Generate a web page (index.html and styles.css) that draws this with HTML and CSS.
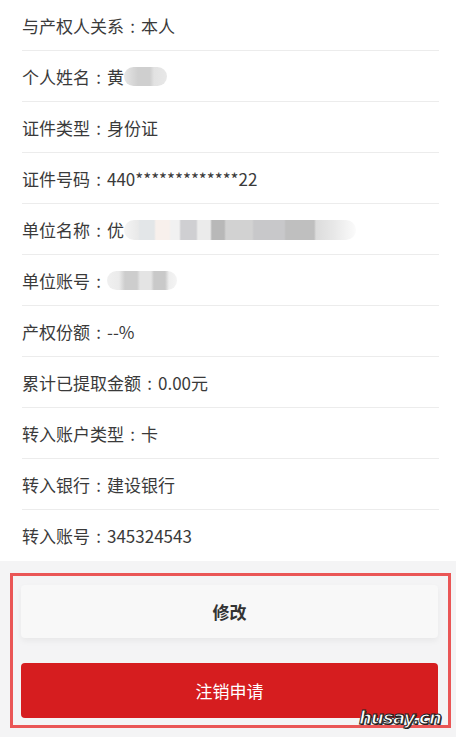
FILE: index.html
```html
<!DOCTYPE html>
<html lang="zh-CN">
<head>
<meta charset="utf-8">
<title>注销申请</title>
<link rel="stylesheet" href="styles.css">
</head>
<body>
<div class="page">
  <ul class="info">
    <li class="row">与产权人关系<span class="colon">:</span>本人</li>
    <li class="row">个人姓名<span class="colon">:</span>黄<span class="mask mask-name"></span></li>
    <li class="row">证件类型<span class="colon">:</span>身份证</li>
    <li class="row">证件号码<span class="colon">:</span>440*************22</li>
    <li class="row">单位名称<span class="colon">:</span>优<span class="mask mask-org"></span></li>
    <li class="row">单位账号<span class="colon">:</span><span class="mask mask-acct"></span></li>
    <li class="row">产权份额<span class="colon">:</span>--%</li>
    <li class="row">累计已提取金额<span class="colon">:</span>0.00元</li>
    <li class="row">转入账户类型<span class="colon">:</span>卡</li>
    <li class="row">转入银行<span class="colon">:</span>建设银行</li>
    <li class="row">转入账号<span class="colon">:</span>345324543</li>
  </ul>
  <div class="actions">
    <button class="btn btn-edit">修改</button>
    <button class="btn btn-cancel">注销申请</button>
  </div>
  <div class="annot"></div>
  <div class="watermark">husay.cn</div>
</div>
</body>
</html>
```

FILE: styles.css
```css
* { box-sizing: border-box; }
html, body {
  margin: 0;
  padding: 0;
  background: #ffffff;
}
body {
  font-family: "Noto Sans CJK SC", "Noto Sans", sans-serif;
  color: #3a3a3a;
}
.page {
  position: relative;
  width: 456px;
  height: 737px;
  overflow: hidden;
  display: flex;
  flex-direction: column;
}
.info {
  list-style: none;
  margin: 0 17px 0 22px;
  padding: 0;
}
.row {
  height: 51px;
  border-bottom: 1px solid #ececec;
  display: flex;
  align-items: center;
  font-size: 17px;
  line-height: 20px;
  padding-top: 1px;
  color: #3a3a3a;
  white-space: nowrap;
}
.row:last-child {
  border-bottom-color: #ffffff;
}
.colon {
  display: inline-block;
  width: 17px;
  text-align: center;
}
.mask {
  display: inline-block;
  height: 19px;
  border-radius: 10px;
  filter: blur(0.6px);
}
.mask-name {
  width: 43px;
  background: linear-gradient(90deg, #e6e6e6 0, #cfcfcf 14px, #cfcfcf 26px, #e2e2e2 30px, #e8e8e8 100%);
}
.mask-org {
  width: 232px;
  height: 20px;
  background: linear-gradient(90deg,
    #f4f4f4 0, #e9e9e9 14px, #e3e6e8 16px, #e3e6e8 30px,
    #f8f0ec 32px, #f8f0ec 45px, #f1f1f1 47px, #f1f1f1 55px,
    #cfcfd2 57px, #cfcfd2 72px, #ebebeb 74px, #ebebeb 86px,
    #b8b8b8 88px, #b8b8b8 100px, #d2d2d2 102px, #d2d2d2 128px,
    #c8c8ca 130px, #c8c8ca 160px, #bfbfbf 162px, #bfbfbf 190px,
    #dcdcdc 192px, #e8e8e8 210px, #f5f5f5 225px, #fbfbfb 100%);
}
.mask-acct {
  width: 70px;
  background: linear-gradient(90deg,
    #f0f0f0 0, #ebebeb 12px, #cdcdcd 18px, #cdcdcd 30px,
    #e4e4e4 33px, #e4e4e4 44px, #c9c9c9 47px, #c9c9c9 58px,
    #eeeeee 62px, #f4f4f4 100%);
}
.actions {
  flex: 1;
  background: #f4f4f5;
  padding: 24px 18px 0 21px;
  display: flex;
  flex-direction: column;
  gap: 25px;
}
.btn {
  width: 100%;
  border: none;
  border-radius: 4px;
  font-family: "Noto Sans CJK SC", "Noto Sans", sans-serif;
  font-size: 17px;
  cursor: pointer;
}
.btn-edit {
  height: 53px;
  background: #f8f8f8;
  color: #333333;
  font-weight: bold;
  box-shadow: 0 3px 6px rgba(0, 0, 0, 0.05);
}
.btn-cancel {
  height: 55px;
  background: #d61d1f;
  color: #ffffff;
}
.annot {
  position: absolute;
  left: 10px;
  top: 573px;
  width: 441px;
  height: 155px;
  border: 3px solid rgba(232, 58, 58, 0.85);
  pointer-events: none;
}
.watermark {
  position: absolute;
  right: 15px;
  top: 707px;
  font-family: "DejaVu Sans", sans-serif;
  font-weight: bold;
  font-style: italic;
  font-size: 18px;
  letter-spacing: -0.8px;
  color: #ffffff;
  -webkit-text-stroke: 1px #222222;
  text-shadow: 1px 1px 0 #222222;
}
```
